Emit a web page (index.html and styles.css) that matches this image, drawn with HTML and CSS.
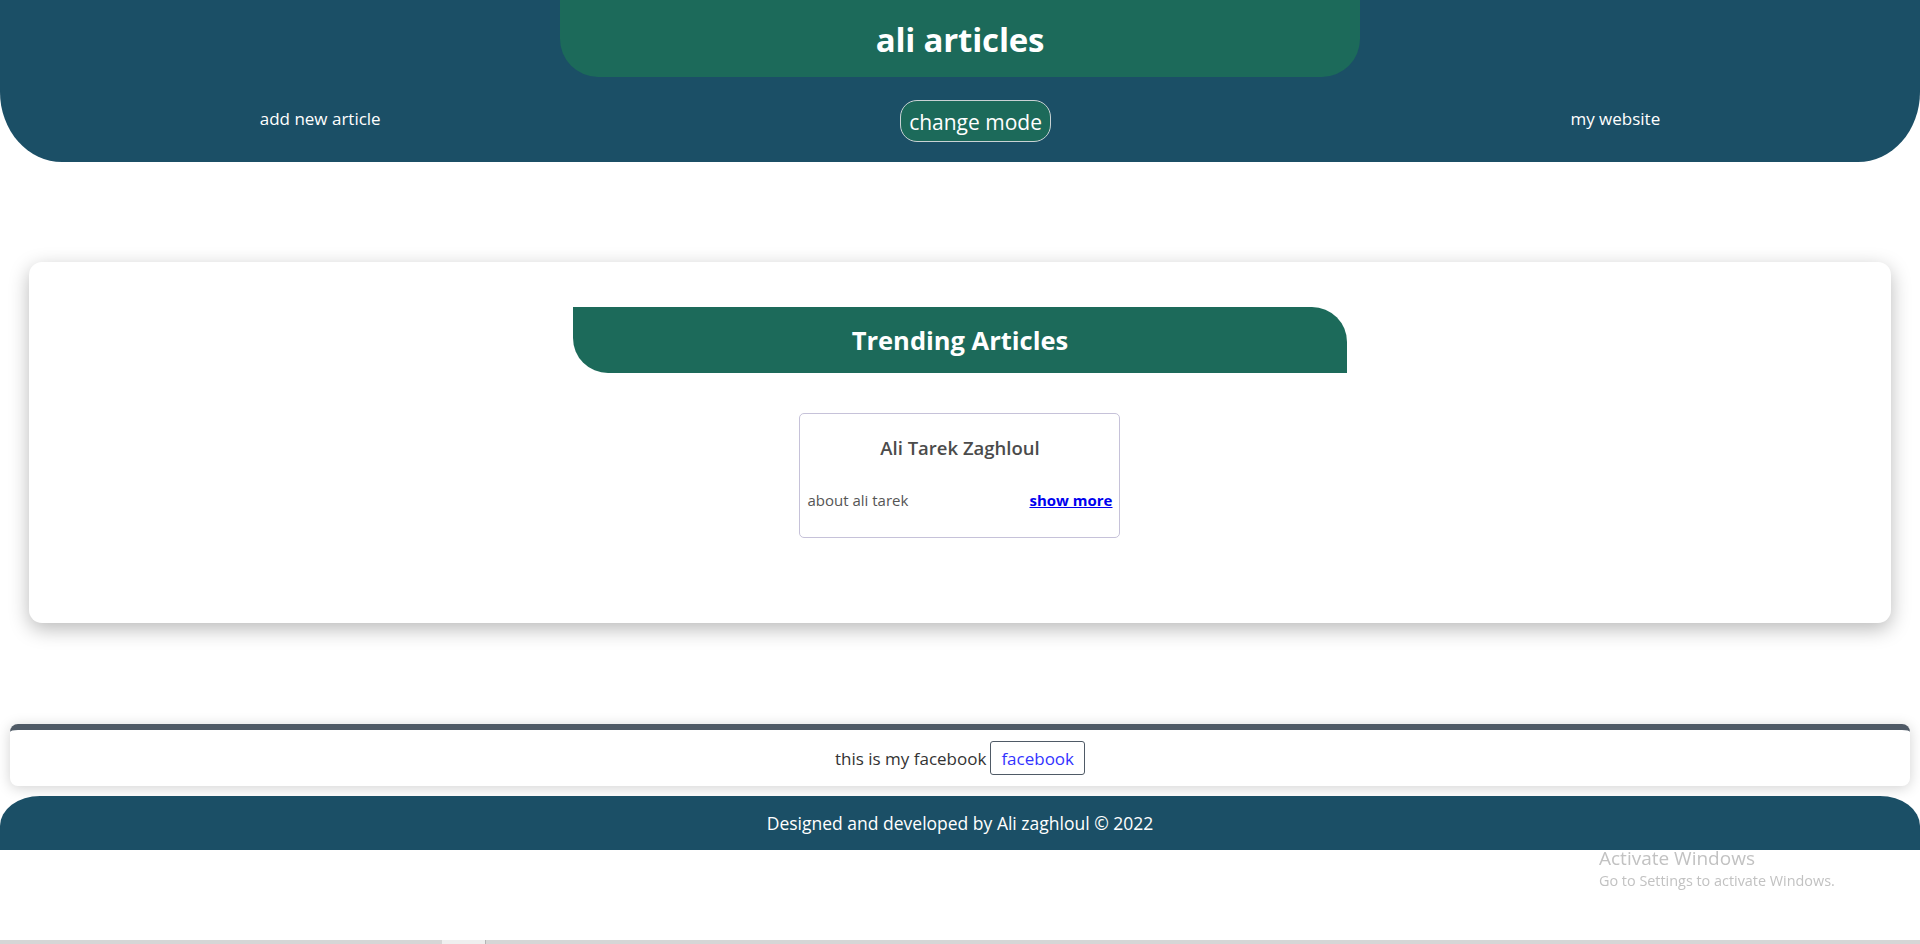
FILE: index.html
```html
<!DOCTYPE html>
<html lang="en">
<head>
<meta charset="utf-8">
<title>ali articles</title>
<link rel="stylesheet" href="styles.css">
</head>
<body>
<header class="site-header">
  <div class="brand"><h1 class="brand-title">ali articles</h1></div>
  <nav class="nav">
    <a class="nav-link" href="#">add new article</a>
    <button class="mode-btn" type="button">change mode</button>
    <a class="nav-link" href="#">my website</a>
  </nav>
</header>

<main class="panel">
  <div class="panel-head"><h2 class="panel-title">Trending Articles</h2></div>
  <article class="card">
    <h3 class="card-title">Ali Tarek Zaghloul</h3>
    <div class="card-row">
      <span class="card-text">about ali tarek</span>
      <a class="card-link" href="#">show more</a>
    </div>
  </article>
</main>

<section class="social">
  <span class="social-text">this is my facebook</span>
  <a class="social-link" href="#">facebook</a>
</section>

<footer class="site-footer">Designed and developed by Ali zaghloul © 2022</footer>

<div class="watermark">
  <div class="wm-title">Activate Windows</div>
  <div class="wm-sub">Go to Settings to activate Windows.</div>
</div>
<div class="hscroll"><div class="hscroll-thumb"></div></div>
</body>
</html>
```
FILE: styles.css
```css
* { box-sizing: border-box; }
html, body { margin: 0; padding: 0; }
body {
  font-family: "Open Sans", "Noto Sans", sans-serif;
  background: #fff;
  color: #333;
  overflow: hidden;
}

.site-header {
  background: #1b4f66;
  height: 162px;
  border-radius: 0 0 62px 62px / 0 0 70px 70px;
  display: flex;
  flex-direction: column;
  align-items: center;
}
.brand {
  width: 800px;
  height: 77px;
  background: #1c6a5a;
  border-radius: 0 0 38px 38px;
  display: flex;
  align-items: center;
  justify-content: center;
}
.brand-title {
  margin: 0;
  color: #fff;
  font-size: 33px;
  font-weight: 700;
  letter-spacing: -0.2px;
  line-height: 1;
  padding-top: 2px;
}
.nav {
  width: 100%;
  margin-top: 23px;
  display: flex;
  justify-content: space-around;
  align-items: center;
  height: 42px;
}
.nav-link {
  color: #fff;
  text-decoration: none;
  font-size: 17px;
  margin-top: -5px;
}
.mode-btn {
  height: 42px;
  padding: 2px 8px 0;
  background: #1c6a5a;
  color: #fff;
  border: 1px solid #c9d2d4;
  border-radius: 17px;
  font-family: inherit;
  font-size: 21px;
}

.panel {
  width: 97%;
  margin: 100px auto 0;
  height: 361px;
  background: #fff;
  border-radius: 13px;
  box-shadow: 0 6px 20px rgba(0, 0, 0, 0.28);
  padding-top: 45px;
  display: flex;
  flex-direction: column;
  align-items: center;
}
.panel-head {
  width: 774px;
  height: 66px;
  background: #1c6a5a;
  border-radius: 0 35px 0 35px;
  display: flex;
  align-items: center;
  justify-content: center;
}
.panel-title {
  margin: 0;
  color: #fff;
  font-size: 25.5px;
  font-weight: 700;
  line-height: 1;
  padding-top: 2px;
}
.card {
  margin-top: 40px;
  width: 321px;
  height: 125px;
  border: 1px solid #c6c2d9;
  border-radius: 5px;
  padding: 0 7px;
  display: flex;
  flex-direction: column;
}
.card-title {
  margin: 22px 0 0;
  text-align: center;
  color: #4b4b4b;
  font-size: 18.5px;
  font-weight: 600;
  line-height: 24px;
}
.card-row {
  margin-top: 30px;
  display: flex;
  justify-content: space-between;
  align-items: center;
  font-size: 15px;
  line-height: 20px;
}
.card-text { color: #555; }
.card-link {
  color: #0000ee;
  font-weight: 700;
  font-size: 15px;
}

.social {
  margin: 101px 10px 0;
  height: 62px;
  border-top: 6px solid #4f5a66;
  border-radius: 8px;
  background: #fff;
  box-shadow: 0 2px 14px rgba(0, 0, 0, 0.18);
  display: flex;
  align-items: center;
  justify-content: center;
  gap: 4px;
  font-size: 17px;
}
.social-text { color: #333; }
.social-link {
  color: #3333ff;
  text-decoration: none;
  border: 1px solid #4f5a66;
  border-radius: 3px;
  height: 34px;
  padding: 0 10px;
  display: flex;
  align-items: center;
}

.site-footer {
  margin-top: 10px;
  height: 54px;
  background: #1b4f66;
  border-radius: 40px 40px 0 0 / 30px 30px 0 0;
  color: #fff;
  display: flex;
  align-items: center;
  justify-content: center;
  font-size: 17.5px;
}

.watermark {
  position: fixed;
  left: 1599px;
  top: 845px;
  color: #c2c2c2;
  pointer-events: none;
}
.wm-title { font-size: 19px; line-height: 26px; }
.wm-sub { font-size: 14.4px; line-height: 20px; }

.hscroll {
  position: fixed;
  left: 0;
  right: 0;
  bottom: 0;
  height: 4px;
  background: #d6d6d6;
}
.hscroll-thumb {
  position: absolute;
  left: 442px;
  width: 44px;
  top: 0;
  bottom: 0;
  background: #efefef;
  border-right: 1px solid #b5b5b5;
}
```
